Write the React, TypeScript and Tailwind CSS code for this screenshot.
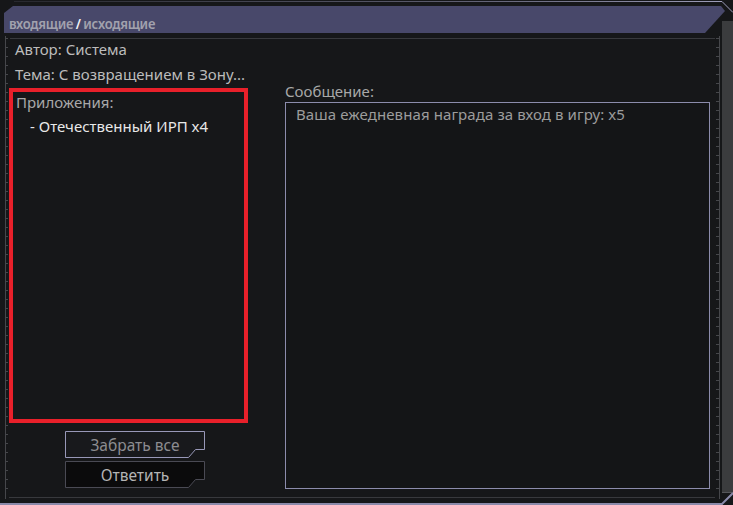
import React from "react";

const ticks = Array.from({ length: 51 }, (_, i) => 38.5 + i * 9);

function Frame() {
  return (
    <svg
      className="pointer-events-none absolute inset-0"
      width={733}
      height={505}
      viewBox="0 0 733 505"
    >
      <defs>
        <linearGradient id="topline" x1="0" x2="1" y1="0" y2="0">
          <stop offset="0" stopColor="#8a8aa6" stopOpacity="0.15" />
          <stop offset="0.6" stopColor="#8a8aa6" stopOpacity="0.6" />
          <stop offset="1" stopColor="#a0a0bc" stopOpacity="1" />
        </linearGradient>
      </defs>
      <path d="M14 1.5 H722 L733 12.5" fill="none" stroke="url(#topline)" />
      <rect x={722} y={21} width={11} height={472} fill="#3b3c3e" />
      <rect x={722} y={492} width={11} height={1} fill="#55565a" />
      <path d="M10 38.5 H715" stroke="#38393d" />
      <path d="M9 497.5 H715" stroke="#38393d" />
      <path d="M5.5 36 V499" stroke="#46474b" />
      <path d="M719.5 36 V499" stroke="#46474b" />
      {ticks.map((y) => (
        <g key={y}>
          <path d={`M5 ${y} H8`} stroke="#46474b" />
          <path d={`M716 ${y} H720`} stroke="#46474b" />
        </g>
      ))}
      <path
        d="M0 504 H722 L733 493"
        fill="none"
        stroke="#8a8aaa"
        strokeWidth={2}
      />
    </svg>
  );
}

function NotchButton({
  label,
  stroke,
  fill,
  textClass,
  className,
}: {
  label: string;
  stroke: string;
  fill: string;
  textClass: string;
  className?: string;
}) {
  return (
    <div className={`relative flex h-[27px] w-[140px] items-center justify-center ${className ?? ""}`}>
      <svg className="absolute inset-0" width={140} height={27} viewBox="0 0 140 27">
        <path
          d="M0.5 0.5 H139.5 V18.5 H130.5 L123.5 26.5 H0.5 Z"
          fill={fill}
          stroke={stroke}
        />
      </svg>
      <span className={`relative text-[15.5px] leading-[20px] ${textClass}`}>{label}</span>
    </div>
  );
}

export default function App() {
  return (
    <div className="relative flex h-[505px] w-[733px] flex-col overflow-hidden bg-[#161719] font-['Noto_Sans',sans-serif]">
      <Frame />

      <div className="ml-[4px] mt-[6px] h-[27px] w-[721px] bg-[#48486a] pl-[5px] pt-[7px] text-[15px] font-semibold leading-[20px] tracking-[-0.3px] [clip-path:polygon(9px_0,717px_0,721px_5px,701px_27px,0_27px,0_7px)]">
        <span className="inline-block origin-left scale-x-[0.87] whitespace-nowrap">
          <span className="text-[#a2a2ae]">входящие</span>
          <span className="mx-[3px] text-[#f2f2f6]">/</span>
          <span className="text-[#a2a2ae]">исходящие</span>
        </span>
      </div>

      <div className="relative flex gap-[36px] pl-[9px]">
        <div className="flex w-[239px] flex-col pt-[4px]">
          <div className="whitespace-nowrap pl-[6px] text-[15px] leading-[25px] text-[#bcbcbc]">
            Автор: Система
          </div>
          <div className="whitespace-nowrap pl-[6px] text-[15px] leading-[25px] text-[#bcbcbc]">
            Тема: С возвращением в Зону...
          </div>

          <div className="mt-[1px] flex h-[335px] flex-col border-4 border-[#e8202a] text-[15px] leading-[20px]">
            <div className="pl-[3px] text-[#a8a8a8]">Приложения:</div>
            <div className="mt-[4px] pl-[17px] text-[#e8e8e8]">- Отечественный ИРП x4</div>
          </div>

          <NotchButton
            className="ml-[56px] mt-[8px]"
            label="Забрать все"
            stroke="#9898b8"
            fill="#18191c"
            textClass="text-[#8c8c90]"
          />
          <NotchButton
            className="ml-[56px] mt-[3px]"
            label="Ответить"
            stroke="#4a4a54"
            fill="#0b0b0c"
            textClass="text-[#b4b4b4]"
          />
        </div>

        <div className="flex w-[426px] flex-col pt-[48px]">
          <div className="pl-[1px] text-[15px] leading-[20px] text-[#a8a8a8]">Сообщение:</div>
          <div className="ml-[1px] mt-[1px] h-[387px] w-[425px] border border-[#8c8cac] bg-[#141517] pl-[10px] pt-[1px] text-[15px] leading-[20px] tracking-[0.1px] text-[#9c9c9c]">
            Ваша ежедневная награда за вход в игру: x5
          </div>
        </div>
      </div>
    </div>
  );
}
